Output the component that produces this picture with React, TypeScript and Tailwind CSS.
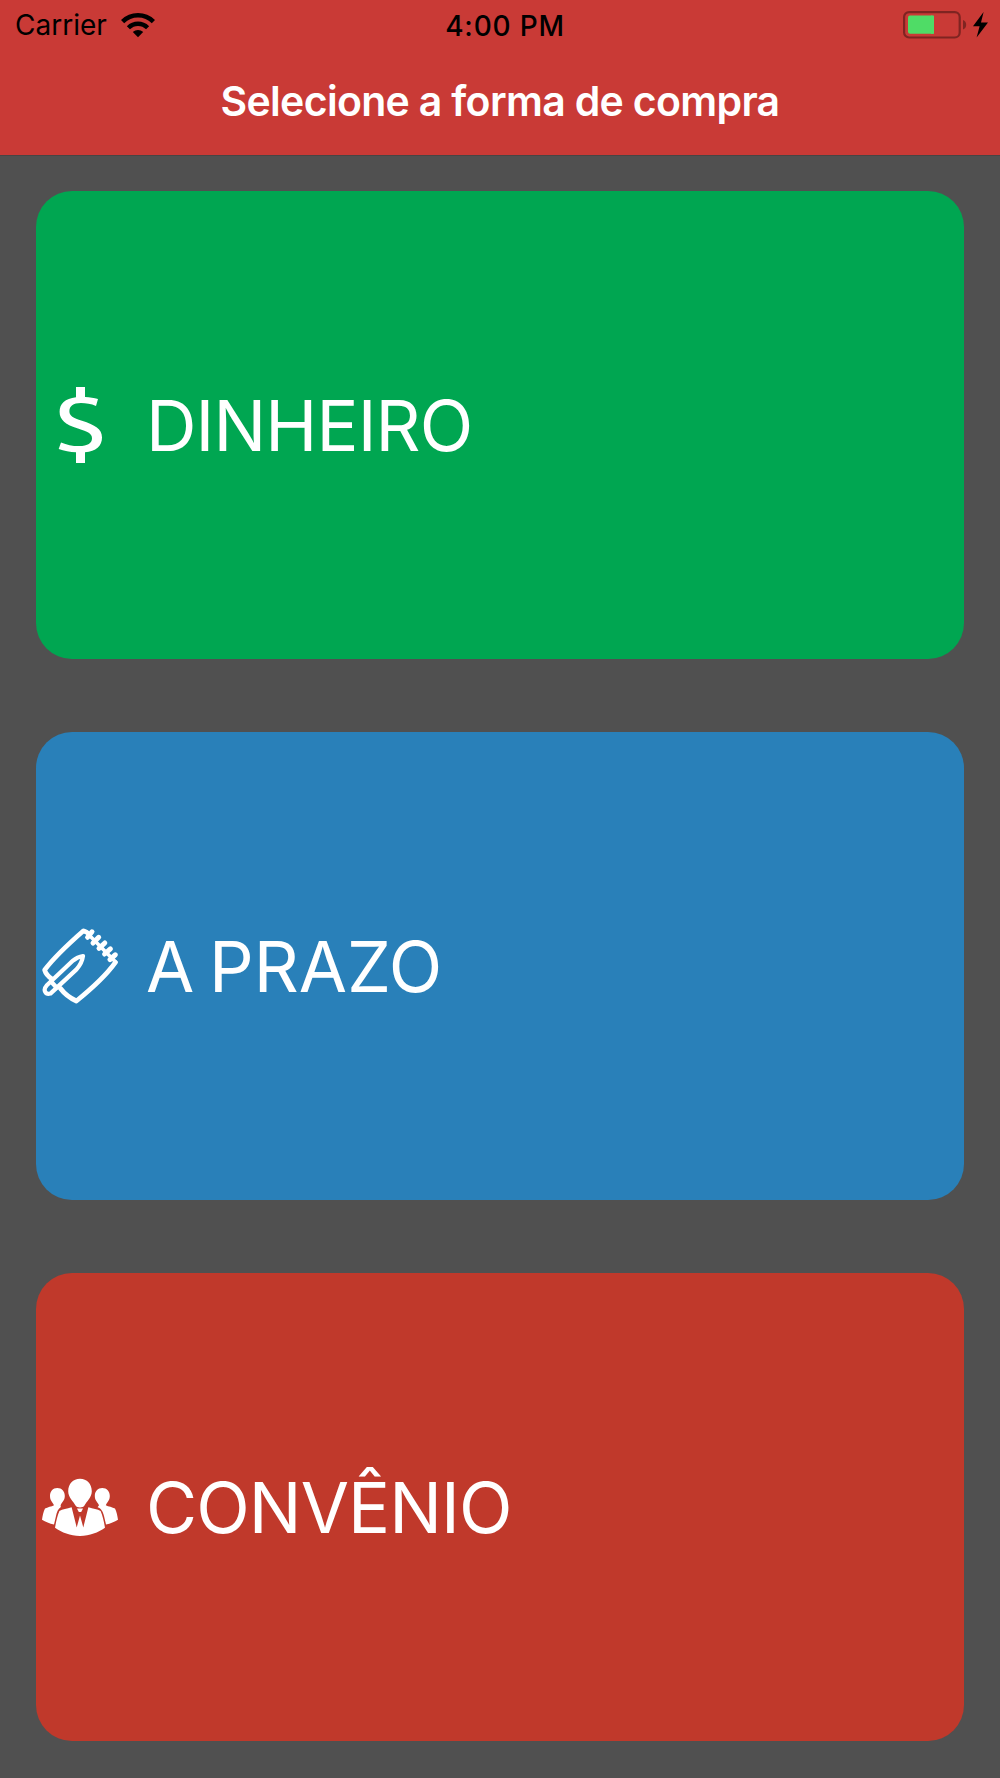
import type { ReactNode } from "react";

function WifiIcon() {
  return (
    <svg width="34" height="25" viewBox="0 0 34 25" fill="none" stroke="#000">
      <path d="M1.6 8.6C10.2 0.2 23.8 0.2 32.4 8.6" strokeWidth="4.6" />
      <path d="M7.4 14.7C12.8 9.4 21.2 9.4 26.6 14.7" strokeWidth="4.4" />
      <path d="M11.8 19C14.7 16.2 19.3 16.2 22.2 19L17 24.3Z" fill="#000" stroke="none" />
    </svg>
  );
}

function BatteryIcon() {
  return (
    <svg width="86" height="28" viewBox="0 0 86 28">
      <rect x="1.1" y="1.1" width="55.6" height="25.4" rx="5" fill="none" stroke="#7f2421" strokeWidth="2.2" />
      <rect x="5" y="4.6" width="26" height="18.2" rx="2" fill="#4fdc66" />
      <path d="M28 4.6h3v18.2h-3z" fill="#4fdc66" />
      <path d="M60 9C62 9.6 63.2 11.6 63.2 13.8S62 18 60 18.6Z" fill="#7f2421" />
      <path d="M80.6 1L70 15.2H76.6L73.6 26.4L85 11.4H78Z" fill="#000" />
    </svg>
  );
}

function DollarIcon() {
  return (
    <svg width="76" height="76" viewBox="0 0 76 76" fill="#fff">
      <path d="M56 12L54 19C49 16.8 44 16 39 16C31 16 27.4 19.2 27.4 24.2C27.4 29 31 30.8 40 33.8C53 38 60 42 60 50.5C60 59 54 64.3 43 65.3V76.3H34V65.3C28 65 22 64 16.7 62L19 55.4C25 57.8 30 59 37 59C46 59 50 56 50 51.2C50 46.8 46 44.8 36 41.6C23.4 37.6 17.6 33 17.6 24.8C17.6 17 23 11.5 34 10.3V0H43V10C48 10.2 52 11 56 12Z" />
    </svg>
  );
}

function NotepadIcon() {
  return (
    <svg width="76" height="76" viewBox="0 0 76 76" fill="none" stroke="#fff" strokeLinecap="round" strokeLinejoin="round">
      <path d="M45 4.4L41.5 2.8C31 12 14 27 2.6 42C3.6 45.5 5.5 48 10 51" strokeWidth="4.6" />
      <path d="M73.4 34.4C63 49 48 62 34.4 73C29 70.5 23 66.5 18.5 60.5" strokeWidth="4.8" />
      <path d="M41 28C37 28.6 34 30 31 32.6L4.6 57.6C0.6 62 3.5 67 8.4 65.6L34.5 41.4C38 37.4 40.4 32.6 41 28Z" strokeWidth="4.2" />
      <path d="M9 53.5L14.5 59.5" strokeWidth="4.4" />
      <path d="M43.6 3.4L73.6 34" strokeWidth="3.6" />
      <g strokeWidth="5">
        <path d="M45.6 9.3L50 3.8" />
        <path d="M51 15L56.7 9.3" />
        <path d="M57 20.4L62.8 15" />
        <path d="M62.6 26L68.4 20.8" />
        <path d="M68 31.6L73.2 26.8" />
      </g>
    </svg>
  );
}

function PeopleIcon() {
  return (
    <svg width="76" height="76" viewBox="0 0 76 76" fill="#fff">
      <path d="M15.3 19C19.8 19 22.8 22.5 22.8 27C22.8 31.5 20 33 18.6 36.2L18.8 38C16 40 14.8 43 14 47L12 55.5C7.5 54.6 3.5 53 0 50.8C0.6 46.8 1.4 42.8 3 39.6C5.5 38 9.5 37.6 12 36.2C10.4 33 8 31.5 8 27C8 22.5 10.8 19 15.3 19Z" />
      <path d="M60.3 19C64.8 19 67.8 22.5 67.8 27C67.8 31.5 65.3 33 63.8 36.2C66.4 37.6 70.4 38 73 39.6C74.6 42.8 75.4 46.8 76 50.8C72.5 53 68.5 54.6 64 55.5L62 47C61 43 59.5 39.5 55.6 38.2L57 36.2C55.5 33 52.8 31.5 52.8 27C52.8 22.5 55.8 19 60.3 19Z" />
      <path d="M29.5 38.3H46.5C51 39.8 55.5 40 58.6 42C60.8 47 62 53 63 58.8C56 63.5 48 67 38 67C28 67 20 63.5 13 58.8C14 53 15.2 47 17.4 42C20.5 40 25 39.8 29.5 38.3Z" />
      <path d="M29.5 37.8H46.5L41.3 58.4L38 46.5L34.7 58.4Z" fill="#c0392b" />
      <path d="M35 39.4H41L39.2 43H36.8Z" />
      <path d="M38 9.8C45 9.8 49.8 15 49.8 22.3C49.8 28.5 44.5 32.5 42.3 36.8C41.2 38.9 34.8 38.9 33.7 36.8C31.5 32.5 26.2 28.5 26.2 22.3C26.2 15 31 9.8 38 9.8Z" />
    </svg>
  );
}

type Option = {
  label: string;
  icon: ReactNode;
  color: string;
  tracking: string;
};

const options: Option[] = [
  { label: "DINHEIRO", icon: <DollarIcon />, color: "bg-[#00a651]", tracking: "tracking-[-0.9px]" },
  { label: "A PRAZO", icon: <NotepadIcon />, color: "bg-[#2980b9]", tracking: "tracking-[0px] [word-spacing:-5px]" },
  { label: "CONVÊNIO", icon: <PeopleIcon />, color: "bg-[#c0392b]", tracking: "tracking-[-0.9px]" },
];

export default function App() {
  return (
    <div className="flex h-[1778px] w-[1000px] flex-col overflow-hidden bg-[#505050] font-['Inter',sans-serif]">
      <header className="h-[156px] shrink-0 border-b border-[#484444] bg-[#c93a36]">
        <div className="grid h-[50px] grid-cols-[1fr_auto_1fr] items-center pl-[15px] pr-[11px] text-[28px] leading-none text-black">
          <div className="flex items-center gap-[14px]">
            <span>Carrier</span>
            <WifiIcon />
          </div>
          <span className="pl-1.5 pt-px font-medium tracking-[0.8px]">4:00 PM</span>
          <div className="flex justify-end">
            <BatteryIcon />
          </div>
        </div>
        <h1 className="pt-[26px] text-center text-[41px] font-semibold leading-[50px] tracking-[-0.68px] text-white">
          Selecione a forma de compra
        </h1>
      </header>

      <main className="flex flex-col gap-[73px] px-9 pt-[35px]">
        {options.map((o) => (
          <button
            key={o.label}
            className={`flex h-[468px] w-full items-center rounded-[36px] pl-1.5 text-left text-white ${o.color}`}
          >
            <span className="shrink-0">{o.icon}</span>
            <span className={`ml-[28px] whitespace-nowrap pt-0.5 text-[70px] leading-none ${o.tracking}`}>{o.label}</span>
          </button>
        ))}
      </main>
    </div>
  );
}
